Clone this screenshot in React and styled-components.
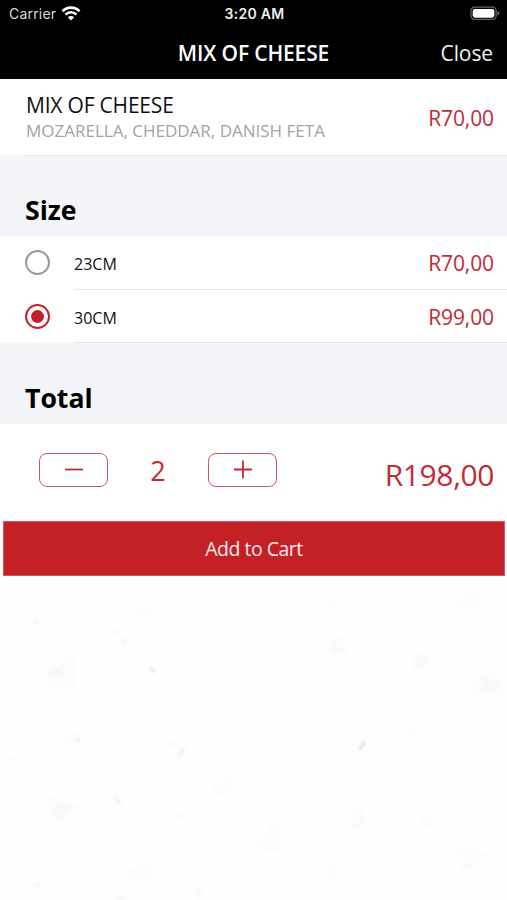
import React, { useState } from "react";
import styled, { createGlobalStyle } from "styled-components";

const GlobalStyle = createGlobalStyle`
  * {
    box-sizing: border-box;
  }
  body {
    margin: 0;
    background-color: #fefefe;
    font-family: "Open Sans", "Noto Sans", sans-serif;
  }
`;

const Screen = styled.div`
  display: flex;
  flex-direction: column;
  width: 507px;
  height: 900px;
  overflow: hidden;
`;
const Header = styled.header`
  height: 79px;
  background-color: #000;
  color: #fff;
`;
const StatusBar = styled.div`
  display: grid;
  grid-template-columns: 1fr auto 1fr;
  align-items: center;
  height: 27px;
  padding: 0 7px 0 9px;
  font-family: Inter, sans-serif;
  font-size: 14px;
`;
const Carrier = styled.div`
  display: flex;
  align-items: center;
  gap: 5px;
  color: #d8d8d8;
  letter-spacing: 0.2px;
`;
const Clock = styled.div`
  font-size: 14px;
  font-weight: 600;
  letter-spacing: 0.3px;
  color: #eee;
`;
const BatteryIcon = styled.svg`
  justify-self: end;
`;
const NavBar = styled.div`
  display: grid;
  grid-template-columns: 1fr auto 1fr;
  align-items: center;
  height: 52px;
  padding: 0 14px;
`;
const NavTitle = styled.h1`
  grid-column: 2;
  margin: 0;
  font-size: 21px;
  font-weight: 600;
  letter-spacing: -0.15px;
`;
const CloseButton = styled.button`
  justify-self: end;
  padding: 0;
  border: none;
  background: none;
  color: #f2f2f2;
  font-family: inherit;
  font-size: 21px;
  letter-spacing: -0.1px;
  cursor: pointer;
`;

const Product = styled.section`
  display: flex;
  justify-content: space-between;
  align-items: center;
  height: 76px;
  padding: 0 13px 0 26px;
  background-color: #fff;
`;
const ProductInfo = styled.div`
  padding-bottom: 1px;
`;
const ProductName = styled.h2`
  margin: 0;
  font-size: 21px;
  font-weight: 400;
  letter-spacing: -0.2px;
  line-height: 28px;
  color: #111;
`;
const Ingredients = styled.p`
  margin: 0;
  font-size: 17px;
  line-height: 23px;
  color: #a3a3a3;
`;
const Price = styled.span`
  padding-top: 2px;
  color: #c22a34;
  font-size: ${(props) => (props.$large ? "30px" : "21px")};
  letter-spacing: ${(props) => (props.$large ? "-0.4px" : "-0.1px")};
`;

const SectionHeading = styled.h3`
  display: flex;
  align-items: flex-end;
  height: ${(props) => props.$height || "81px"};
  margin: 0;
  padding: 0 25px 8px;
  background-color: #f3f5f9;
  color: #000;
  font-size: 26.6px;
  font-weight: 700;
  line-height: 35px;
`;

const OptionRow = styled.div`
  display: flex;
  align-items: stretch;
  height: 53.5px;
  padding-left: 25px;
  background-color: #fff;
  cursor: pointer;
`;
const RadioCell = styled.div`
  display: flex;
  align-items: center;
  width: 49px;
`;
const Radio = styled.span`
  display: flex;
  justify-content: center;
  align-items: center;
  width: 25px;
  height: 25px;
  border: 2px solid ${(props) => (props.$checked ? "#c52028" : "#999")};
  border-radius: 50%;
  &::after {
    content: "";
    width: 13px;
    height: 13px;
    border-radius: 50%;
    background-color: ${(props) => (props.$checked ? "#c52028" : "transparent")};
  }
`;
const OptionBody = styled.div`
  display: flex;
  flex: 1;
  justify-content: space-between;
  align-items: center;
  padding-right: 13px;
  border-bottom: 1px solid #e4e5e8;
`;
const OptionLabel = styled.span`
  padding-top: 4px;
  font-size: 16px;
  color: #111;
`;
const Divider = styled.div`
  height: 1px;
  margin-left: 26px;
  background-color: #e4e5e8;
`;
const DividerTrack = styled.div`
  background-color: #f3f5f9;
`;

const TotalRow = styled.section`
  display: flex;
  justify-content: space-between;
  height: 96.5px;
  padding: 29px 13px 0 39px;
  background-color: #fff;
`;
const Stepper = styled.div`
  display: grid;
  grid-template-columns: 69px 100px 69px;
  grid-template-rows: 34px;
`;
const StepButton = styled.button`
  display: flex;
  justify-content: center;
  align-items: center;
  padding: 0;
  border: 1.5px solid #c9565e;
  border-radius: 8px;
  background: none;
  cursor: pointer;
`;
const Quantity = styled.span`
  color: #c22a34;
  font-size: 27px;
  line-height: 36px;
  text-align: center;
`;
const TotalPrice = styled.div`
  padding-top: 1px;
`;
const CartButton = styled.button`
  flex: none;
  height: 55px;
  margin: 0 2px 0 3px;
  padding: 1px 0 0;
  border: 1px solid #d4565c;
  background-color: #c42127;
  color: #fbeaea;
  font-family: inherit;
  font-size: 19.5px;
  letter-spacing: -0.5px;
  cursor: pointer;
`;
const Texture = styled.svg`
  display: block;
  flex: none;
  path {
    filter: blur(1px);
  }
`;

const sizes = [
  { label: "23CM", price: 70 },
  { label: "30CM", price: 99 },
];

// faint crumbs printed on the paper background
const crumbs = [
  { d: "M42 108l20-18 12-11 1 39-25-1z", fill: "#fbfbfb" },
  { d: "M49 101l9-4 6-7-2 13-8 2z", fill: "#f7f7f7" },
  { d: "M45 224l17 4 18 7-12 8-10 9-7-12z", fill: "#fbfbfb" },
  { d: "M52 239l10-6 11 2-9 6-8 6z", fill: "#f7f7f7" },
  { d: "M128 43l13-5 12-8-2 22-12-2z", fill: "#fcfcfc" },
  { d: "M113 60l5-3 2 4-4 3zM120 69l8-5-1 7-4 7z", fill: "#f9f9f9" },
  { d: "M148 97l4-1 4 4-2 2-3-1z", fill: "#ebebeb" },
  { d: "M65 164l12-4 4 8-6 3-4 9-6-6z", fill: "#fbfbfb" },
  { d: "M75 169l5-1v3l-4 1z", fill: "#eee" },
  { d: "M4 189l8-6 2 5-4 4zM20 184l5-2 1 3-3 2z", fill: "#fafafa" },
  { d: "M169 171l6 1v3l-5 1zM180 179l4-4 3 4-4 6-5 4-2-3z", fill: "#f7f7f7" },
  { d: "M114 223l5 1-1 4 5 5-5 1-4-7z", fill: "#f5f5f5" },
  { d: "M211 216l12-5 2-6 9 8-5 8-11 5z", fill: "#fbfbfb" },
  { d: "M249 273l14-7 13-20 7 33-17 1z", fill: "#fbfbfb" },
  { d: "M173 246l9-7 7 6-5 5z", fill: "#fbfbfb" },
  { d: "M330 73l6-7 8 2 3 13-8 3-8-2z", fill: "#fafafa" },
  { d: "M326 35l7-7 8 10-2 7-10-3z", fill: "#fcfcfc" },
  { d: "M412 91l5-8 10-1 5 11-10 4-8 1z", fill: "#fafafa" },
  { d: "M455 28l11-8 15-1-3 19-18 5z", fill: "#fcfcfc" },
  { d: "M468 114l15-10 8-9 9 17 6 14-19-4-9 3z", fill: "#fbfbfb" },
  { d: "M481 111l9-4 6 5-7 9z", fill: "#f8f8f8" },
  { d: "M359 177l4-8 3 3-3 5-4 3z", fill: "#e6e6e6" },
  { d: "M402 160l9-5 11-4-2 13 2 7-7 2-1-9z", fill: "#fcfcfc" },
  { d: "M350 253l5-14 10 1v16l-8 3z", fill: "#fbfbfb" },
  { d: "M419 247l13-3 1 13-12-1z", fill: "#fbfbfb" },
  { d: "M447 274l22 3 20 5-13 11-18 10 5-16z", fill: "#fbfbfb" },
  { d: "M121 301l14-5 17-7-2 23-14-1z", fill: "#fbfbfb" },
  { d: "M329 294l5-3 5 13-6 5-7-5z", fill: "#fbfbfb" },
  { d: "M31 53l6-3 3 1-4 2z", fill: "#f0f0f0" },
  { d: "M35 314l5-2-1 4z", fill: "#eee" },
  { d: "M196 319l6-7 1 12-5 6-3-3z", fill: "#fafafa" },
  { d: "M114 324l8 1 6 5-11-1z", fill: "#f6f6f6" },
];

const formatPrice = (value) => `R${value.toFixed(2).replace(".", ",")}`;

const WifiIcon = () => (
  <svg width="20" height="15" viewBox="0 0 20 15" fill="none">
    <path d="M1.5 5.2a12 12 0 0 1 17 0" stroke="#fff" strokeWidth="2.7" />
    <path d="M4.5 8.6a7.7 7.7 0 0 1 11 0" stroke="#fff" strokeWidth="2.5" />
    <path d="M6.9 11.3a4.4 4.4 0 0 1 6.2 0L10 14.5z" fill="#fff" />
  </svg>
);

const StepIcon = ({ plus }) => (
  <svg width="20" height="20" viewBox="0 0 20 20" stroke="#c22a34" strokeWidth="1.8">
    <path d={plus ? "M1 9.5h18M10 .5v18" : "M1 9.5h18"} />
  </svg>
);

const App = () => {
  const [selected, setSelected] = useState(1);
  const [quantity, setQuantity] = useState(2);

  return (
    <>
      <GlobalStyle />
      <Screen>
        <Header>
          <StatusBar>
            <Carrier>
              Carrier
              <WifiIcon />
            </Carrier>
            <Clock>3:20 AM</Clock>
            <BatteryIcon width="30" height="15" viewBox="0 0 31 15">
              <rect x="1" y="1" width="26" height="12.5" rx="3.8" fill="none" stroke="#666" strokeWidth="1.3" />
              <rect x="2.8" y="2.8" width="22.4" height="9" rx="2.2" fill="#fff" />
              <path d="M28.5 5v4.5q1.8-.7 1.8-2.2T28.5 5z" fill="#777" />
            </BatteryIcon>
          </StatusBar>
          <NavBar>
            <NavTitle>MIX OF CHEESE</NavTitle>
            <CloseButton>Close</CloseButton>
          </NavBar>
        </Header>

        <Product>
          <ProductInfo>
            <ProductName>MIX OF CHEESE</ProductName>
            <Ingredients>MOZARELLA, CHEDDAR, DANISH FETA</Ingredients>
          </ProductInfo>
          <Price>{formatPrice(70)}</Price>
        </Product>
        <DividerTrack>
          <Divider />
        </DividerTrack>

        <SectionHeading $height="80px">Size</SectionHeading>
        {sizes.map((size, index) => (
          <OptionRow key={size.label} onClick={() => setSelected(index)}>
            <RadioCell>
              <Radio $checked={selected === index} />
            </RadioCell>
            <OptionBody>
              <OptionLabel>{size.label}</OptionLabel>
              <Price>{formatPrice(size.price)}</Price>
            </OptionBody>
          </OptionRow>
        ))}

        <SectionHeading>Total</SectionHeading>
        <TotalRow>
          <Stepper>
            <StepButton
              aria-label="minus"
              onClick={() => setQuantity(Math.max(1, quantity - 1))}
            >
              <StepIcon />
            </StepButton>
            <Quantity>{quantity}</Quantity>
            <StepButton aria-label="plus" onClick={() => setQuantity(quantity + 1)}>
              <StepIcon plus />
            </StepButton>
          </Stepper>
          <TotalPrice>
            <Price $large>{formatPrice(sizes[selected].price * quantity)}</Price>
          </TotalPrice>
        </TotalRow>
        <CartButton>Add to Cart</CartButton>

        <Texture width="507" height="324" viewBox="0 5 507 324">
          {crumbs.map((crumb) => (
            <path key={crumb.d} d={crumb.d} fill={crumb.fill} />
          ))}
        </Texture>
      </Screen>
    </>
  );
};

export default App;
